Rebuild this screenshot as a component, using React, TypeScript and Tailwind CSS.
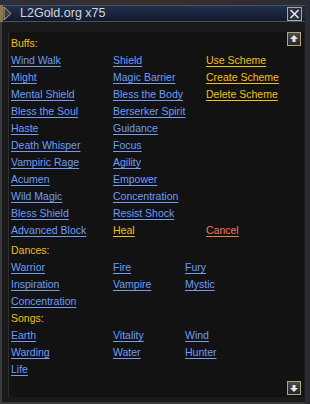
import React from 'react'

const buffs = [
  ['Wind Walk', 'Shield', 'Use Scheme'],
  ['Might', 'Magic Barrier', 'Create Scheme'],
  ['Mental Shield', 'Bless the Body', 'Delete Scheme'],
  ['Bless the Soul', 'Berserker Spirit', ''],
  ['Haste', 'Guidance', ''],
  ['Death Whisper', 'Focus', ''],
  ['Vampiric Rage', 'Agility', ''],
  ['Acumen', 'Empower', ''],
  ['Wild Magic', 'Concentration', ''],
  ['Bless Shield', 'Resist Shock', ''],
]

const dances = [
  ['Warrior', 'Fire', 'Fury'],
  ['Inspiration', 'Vampire', 'Mystic'],
  ['Concentration', '', ''],
]

const songs = [
  ['Earth', 'Vitality', 'Wind'],
  ['Warding', 'Water', 'Hunter'],
  ['Life', '', ''],
]

function Link({ text, color = 'text-[#6e9cf7]' }: { text: string; color?: string }) {
  if (!text) return <span />
  return <span className={`${color} underline underline-offset-[2px] whitespace-nowrap`}>{text}</span>
}

function Heading({ text }: { text: string }) {
  return <div className="h-[17px] text-[#f5c000]">{text}</div>
}

function ScrollBtn({ up }: { up?: boolean }) {
  return (
    <div className="w-[14px] h-[14px] border border-[#b4a66e] bg-gradient-to-b from-[#4a4d52] to-[#25272b] flex items-center justify-center">
      <svg width="10" height="10" viewBox="0 0 10 10">
        {up ? (
          <path d="M5 1 L9 5 L6.5 5 L6.5 8 L3.5 8 L3.5 5 L1 5 Z" fill="#e8e8e8" />
        ) : (
          <path d="M5 9 L9 5 L6.5 5 L6.5 2 L3.5 2 L3.5 5 L1 5 Z" fill="#e8e8e8" />
        )}
      </svg>
    </div>
  )
}

export default function App() {
  return (
    <div className="w-[310px] h-[404px] overflow-hidden bg-gradient-to-r from-[#2c2f3a] via-[#3a2e2a] to-[#2a2c34] pt-[5px] text-[10.5px] leading-[17px]" style={{ fontFamily: '"Liberation Sans", Arial, sans-serif' }}>
      <div className="w-[305px] h-[399px] flex flex-col bg-[#1a1a1b] border-l-2 border-b-2 border-[#3a3a3c]">
        {/* Title bar */}
        <div className="h-[17px] flex items-center bg-gradient-to-b from-[#22304f] to-[#111a2d] border-y border-[#4a5060] -ml-[2px]">
          <svg width="14" height="17" viewBox="0 0 14 17" className="shrink-0">
            <rect x="0" y="0" width="3" height="17" fill="#8a7a4a" />
            <path d="M4 2 L11 8.5 L4 15 Z" fill="#3a3f4c" stroke="#b8a878" strokeWidth="1" />
          </svg>
          <span className="ml-[6px] text-[12.5px] text-[#d4d6da] leading-none">L2Gold.org x75</span>
          <div className="ml-auto mr-[3px] w-[15px] h-[14px] border border-[#a8a8a8] bg-[#2a3040] flex items-center justify-center">
            <svg width="11" height="10" viewBox="0 0 11 10">
              <path d="M1.5 1 L9.5 9 M9.5 1 L1.5 9" stroke="#e6e6e6" strokeWidth="1.6" />
            </svg>
          </div>
        </div>

        {/* Content panel */}
        <div className="mt-[10px] ml-[6px] flex-1 flex bg-[#121213] border-l border-[#2e2e30] mb-[5px] mr-[1px]">
          <div className="flex-1 pl-[2px] pt-[3px]">
            <Heading text="Buffs:" />
            {buffs.map((r, i) => (
              <div key={i} className="h-[17px] grid grid-cols-[102px_93px_1fr]">
                <Link text={r[0]} />
                <Link text={r[1]} />
                <Link text={r[2]} color="text-[#f5c000]" />
              </div>
            ))}
            <div className="h-[17px] grid grid-cols-[102px_93px_1fr]">
              <Link text="Advanced Block" />
              <Link text="Heal" color="text-[#f5c000]" />
              <Link text="Cancel" color="text-[#f27a4a]" />
            </div>
            <div className="h-[3px]" />
            <Heading text="Dances:" />
            {dances.map((r, i) => (
              <div key={i} className="h-[17px] grid grid-cols-[102px_72px_1fr]">
                <Link text={r[0]} />
                <Link text={r[1]} />
                <Link text={r[2]} />
              </div>
            ))}
            <Heading text="Songs:" />
            {songs.map((r, i) => (
              <div key={i} className="h-[17px] grid grid-cols-[102px_72px_1fr]">
                <Link text={r[0]} />
                <Link text={r[1]} />
                <Link text={r[2]} />
              </div>
            ))}
          </div>
          <div className="w-[16px] mr-[1px] flex flex-col justify-between pt-[0px] pb-[2px]">
            <ScrollBtn up />
            <ScrollBtn />
          </div>
        </div>
      </div>
    </div>
  )
}
